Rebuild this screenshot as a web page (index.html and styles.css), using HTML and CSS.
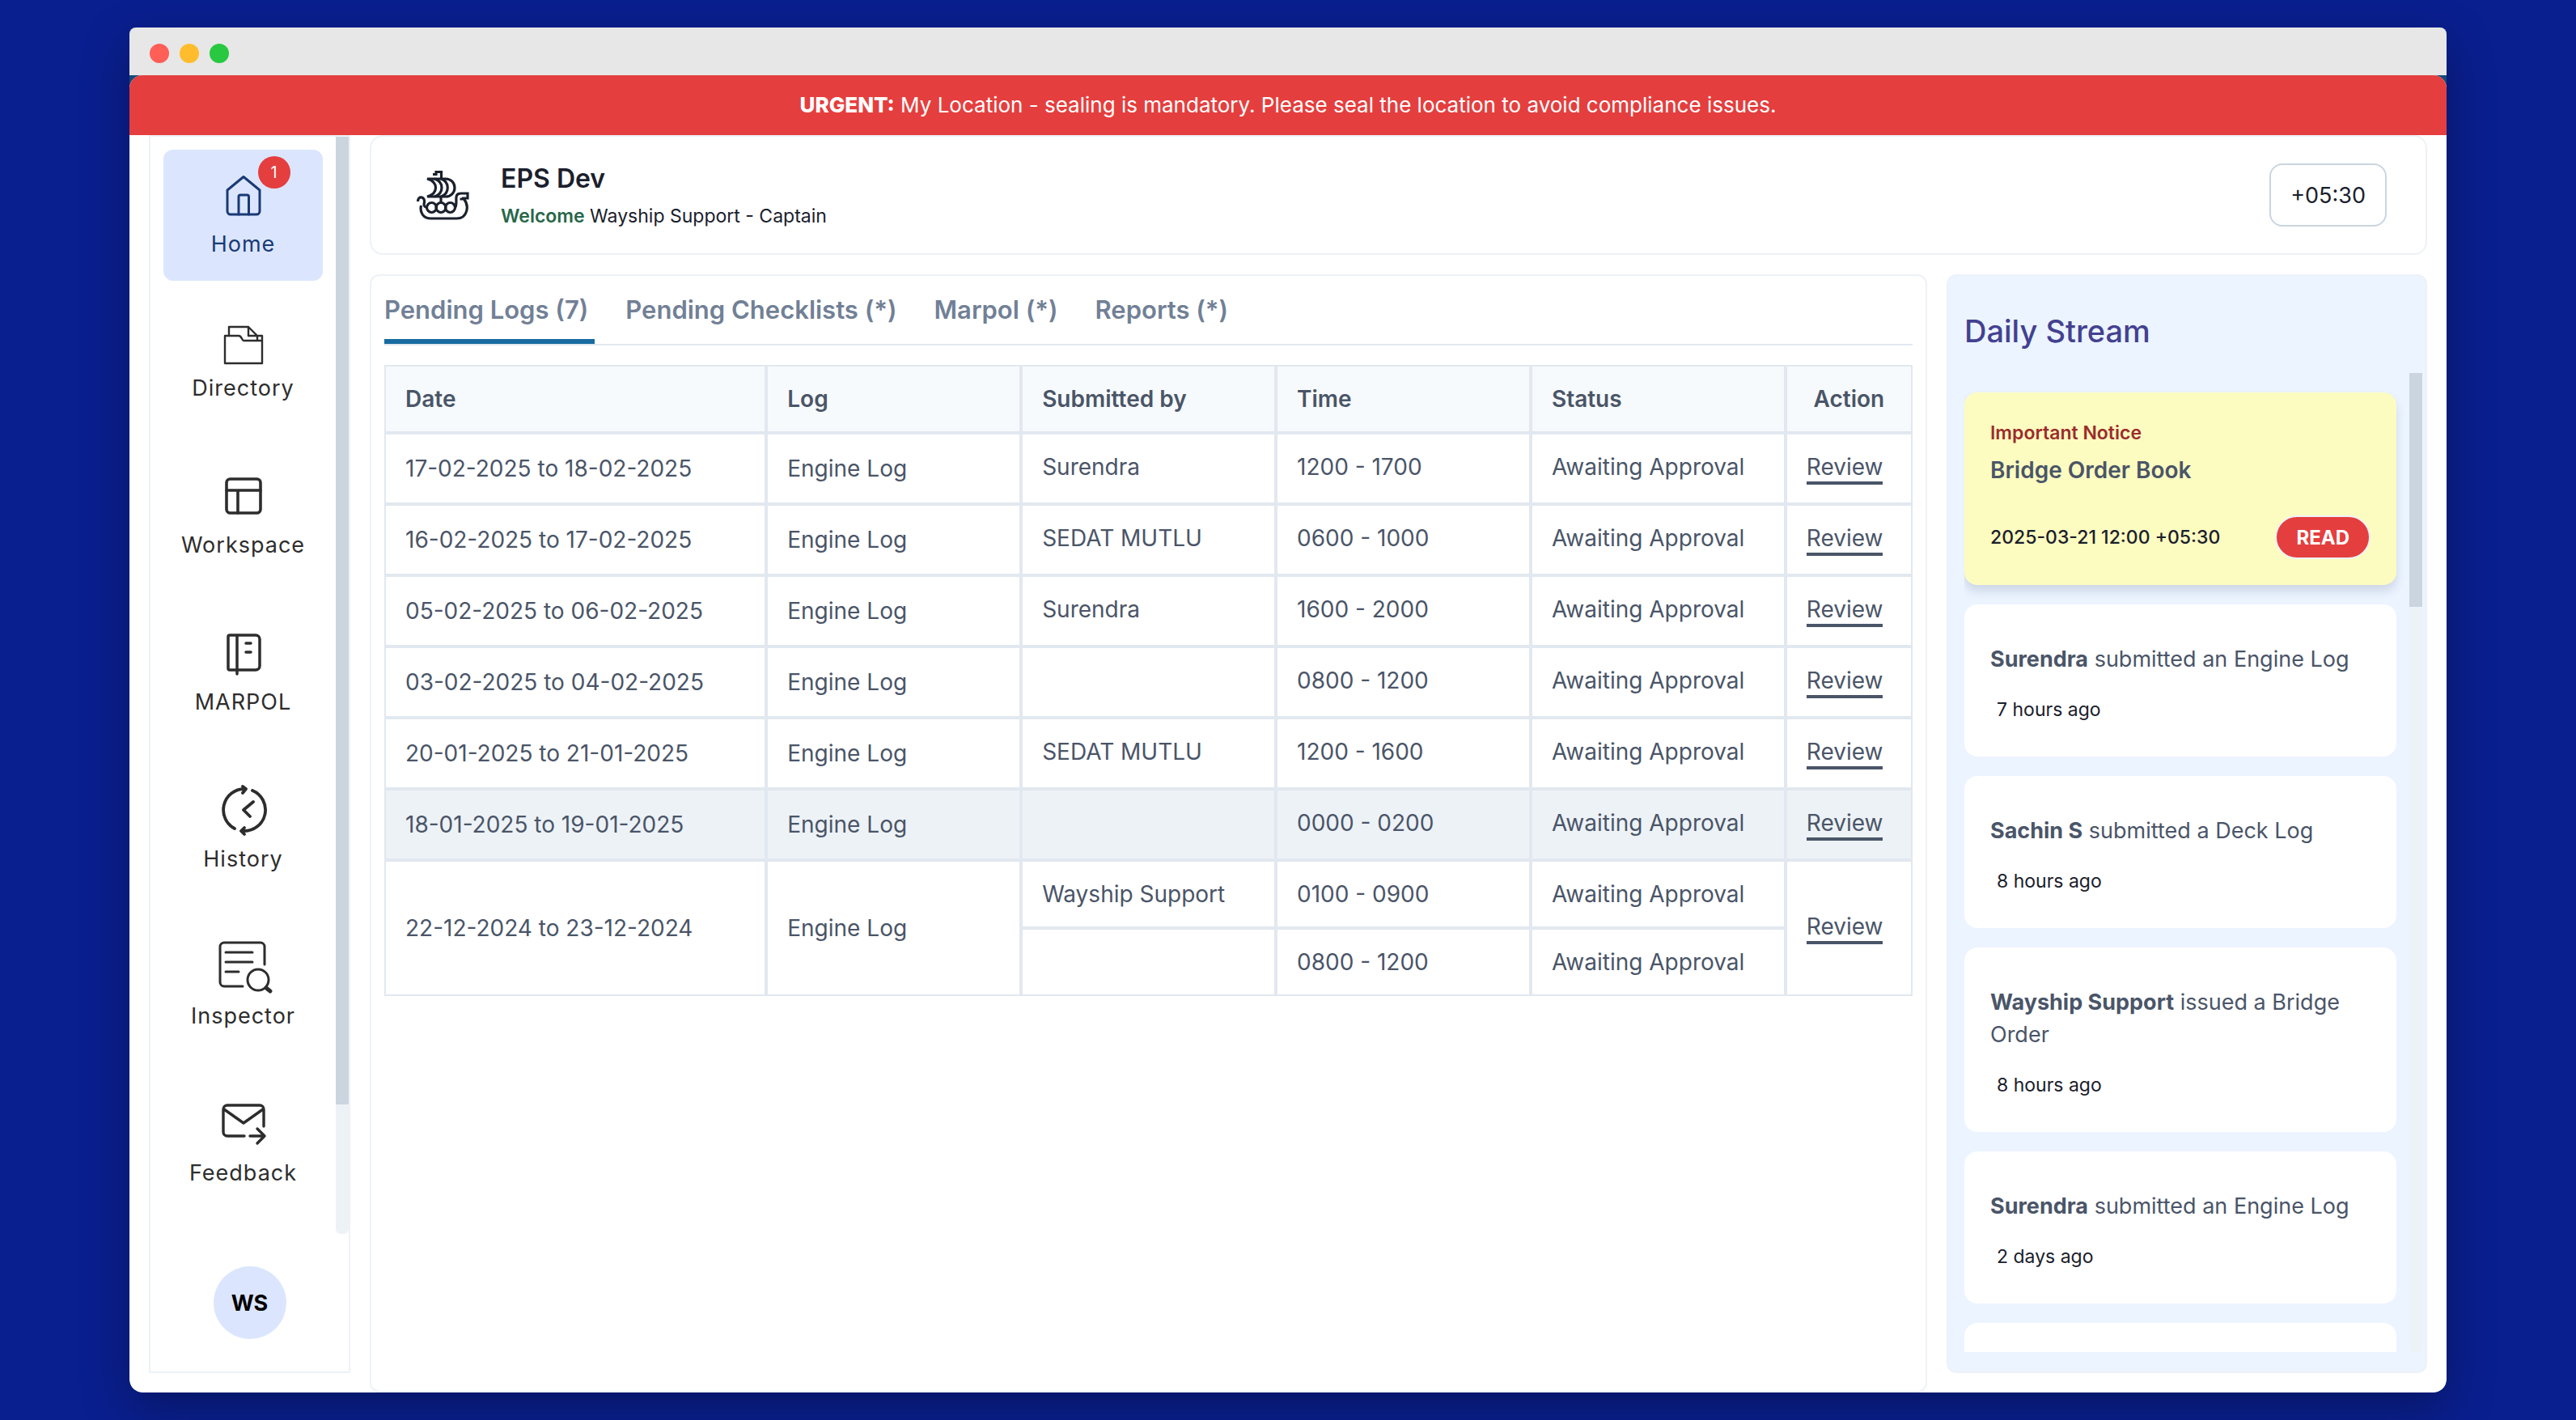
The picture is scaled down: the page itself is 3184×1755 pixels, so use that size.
FILE: index.html
```html
<!DOCTYPE html>
<html lang="en">
<head>
    <meta charset="UTF-8">
    <meta name="viewport" content="width=device-width, initial-scale=1.0">
    <title>EPS Dev</title>
    <link rel="stylesheet" href="styles.css">
</head>
<body>
    <div class="window">
        <!-- Title bar -->
        <div class="titlebar">
            <span class="light light-close"></span>
            <span class="light light-min"></span>
            <span class="light light-max"></span>
        </div>

        <div class="app">
            <div class="alert" role="alert"><strong>URGENT:</strong> My Location - sealing is mandatory. Please seal the location to avoid compliance issues.</div>

            <div class="layout">
                <!-- Sidebar -->
                <aside class="sidebar">
                    <div class="nav-scroll">
                        <nav class="nav">
                            <a class="nav-item active" href="#">
                                <span class="nav-icon">
                                    <svg width="64" height="64" viewBox="0 0 64 64" stroke-width="3">
                                        <path d="M12 26 32 9.500 52 26V52a4 4 0 0 1-4 4H16a4 4 0 0 1-4-4z"/>
                                        <path d="M26 56V34a2 2 0 0 1 2-2h8.500a2 2 0 0 1 2 2V56"/>
                                    </svg>
                                    <span class="badge">1</span>
                                </span>
                                <span class="nav-label">Home</span>
                            </a>
                            <a class="nav-item" href="#">
                                <svg width="48" height="48" viewBox="0 0 48 48" stroke-width="2.400">
                                    <path d="M1 12h17c4 0 4 6 6 6h23v28H1zM6 12V1h24l11 11h6v6M30 1v11h11v6"/>
                                </svg>
                                <span class="nav-label">Directory</span>
                            </a>
                            <a class="nav-item" href="#">
                                <svg width="64" height="64" viewBox="0 0 64 64" stroke-width="3.600">
                                    <rect x="11" y="11" width="42" height="42" rx="4.500"/>
                                    <path d="M11 25h42M25 25v28"/>
                                </svg>
                                <span class="nav-label">Workspace</span>
                            </a>
                            <a class="nav-item" href="#">
                                <svg width="64" height="64" viewBox="0 0 64 64" stroke-width="3.500">
                                    <path d="M15 10h32a5 5 0 0 1 5 5v33a5 5 0 0 1-5 5H15a2 2 0 0 1-2-2V12a2 2 0 0 1 2-2zM24 10v48M35 20h6M35 31h6"/>
                                </svg>
                                <span class="nav-label">MARPOL</span>
                            </a>
                            <a class="nav-item" href="#">
                                <svg width="64" height="64" viewBox="0 0 64 64" stroke-width="3.800">
                                    <path d="M21 55A26 26 0 0 1 33 6M31 3l4 3-4 5M43 8a26 26 0 0 1-11 50M33 54l-4 4 4 4M44 22 32 32l8 8"/>
                                </svg>
                                <span class="nav-label">History</span>
                            </a>
                            <a class="nav-item" href="#">
                                <svg width="64" height="64" viewBox="0 0 64 64" stroke-width="3">
                                    <path d="M31 56H8a5 5 0 0 1-5-5V7a5 5 0 0 1 5-5h45a5 5 0 0 1 5 5v22M10 14h33M10 26h33M10 38h16"/>
                                    <circle cx="50" cy="48" r="13"/>
                                    <path d="m60 58 5 4" stroke-width="5"/>
                                </svg>
                                <span class="nav-label">Inspector</span>
                            </a>
                            <a class="nav-item" href="#">
                                <svg width="64" height="64" viewBox="0 0 64 64" stroke-width="3.400">
                                    <path d="M33 47H12a5 5 0 0 1-5-5V14a5 5 0 0 1 5-5h40a5 5 0 0 1 5 5v21M8 14l24 17 24-17M40 47h17M49 38l9 9-9 9"/>
                                </svg>
                                <span class="nav-label">Feedback</span>
                            </a>
                        </nav>
                        <div class="track"><div class="thumb" style="height: 88.2%"></div></div>
                    </div>
                    <button class="avatar" type="button">WS</button>
                </aside>

                <main class="content">
                    <!-- Vessel header -->
                    <header class="vessel">
                        <svg class="ship" width="64" height="64" viewBox="0 0 64 60" stroke-width="3.200">
                            <path d="M20 4.500h4V1.500h6.500V9M30 32v7"/>
                            <path d="M13 10h23a11 11 0 0 1 0 22H13c14-4 14-18 0-22z"/>
                            <path d="M22 10c12 4 12 18 0 22M30 10c11 4 11 18 0 22"/>
                            <circle cx="18.500" cy="45.500" r="6"/>
                            <circle cx="30" cy="45.500" r="6"/>
                            <circle cx="41.500" cy="45.500" r="6"/>
                            <path d="M1.500 38c0-8 9-6 8 1-1 4 0 6 3 6M5.500 43c-2 9 3 16 12 16h32c13 0 16-15 9-24h-5M48 45c3-8-3-17 7-17h8v6h-7"/>
                        </svg>
                        <div class="vessel-info">
                            <h1>EPS Dev</h1>
                            <p><b>Welcome</b> Wayship Support - Captain</p>
                        </div>
                        <button class="timezone" type="button">+05:30</button>
                    </header>

                    <div class="columns">
                        <section class="panel">
                            <div class="tabs" role="tablist">
                                <button class="tab selected" role="tab" aria-selected="true">Pending Logs (7)</button>
                                <button class="tab" role="tab">Pending Checklists (*)</button>
                                <button class="tab" role="tab">Marpol (*)</button>
                                <button class="tab" role="tab">Reports (*)</button>
                            </div>

                            <table class="logs">
                                <colgroup>
                                    <col class="col-date">
                                    <col class="col-mid">
                                    <col class="col-mid">
                                    <col class="col-mid">
                                    <col class="col-mid">
                                    <col>
                                </colgroup>
                                <thead>
                                    <tr>
                                        <th>Date</th>
                                        <th>Log</th>
                                        <th>Submitted by</th>
                                        <th>Time</th>
                                        <th>Status</th>
                                        <th class="action">Action</th>
                                    </tr>
                                </thead>
                                <tbody>
                                    <tr>
                                        <td class="mid">17-02-2025 to 18-02-2025</td>
                                        <td class="mid">Engine Log</td>
                                        <td>Surendra</td>
                                        <td>1200 - 1700</td>
                                        <td>Awaiting Approval</td>
                                        <td class="mid"><a href="#">Review</a></td>
                                    </tr>
                                    <tr>
                                        <td class="mid">16-02-2025 to 17-02-2025</td>
                                        <td class="mid">Engine Log</td>
                                        <td>SEDAT MUTLU</td>
                                        <td>0600 - 1000</td>
                                        <td>Awaiting Approval</td>
                                        <td class="mid"><a href="#">Review</a></td>
                                    </tr>
                                    <tr>
                                        <td class="mid">05-02-2025 to 06-02-2025</td>
                                        <td class="mid">Engine Log</td>
                                        <td>Surendra</td>
                                        <td>1600 - 2000</td>
                                        <td>Awaiting Approval</td>
                                        <td class="mid"><a href="#">Review</a></td>
                                    </tr>
                                    <tr>
                                        <td class="mid">03-02-2025 to 04-02-2025</td>
                                        <td class="mid">Engine Log</td>
                                        <td></td>
                                        <td>0800 - 1200</td>
                                        <td>Awaiting Approval</td>
                                        <td class="mid"><a href="#">Review</a></td>
                                    </tr>
                                    <tr>
                                        <td class="mid">20-01-2025 to 21-01-2025</td>
                                        <td class="mid">Engine Log</td>
                                        <td>SEDAT MUTLU</td>
                                        <td>1200 - 1600</td>
                                        <td>Awaiting Approval</td>
                                        <td class="mid"><a href="#">Review</a></td>
                                    </tr>
                                    <tr class="hovered">
                                        <td class="mid">18-01-2025 to 19-01-2025</td>
                                        <td class="mid">Engine Log</td>
                                        <td></td>
                                        <td>0000 - 0200</td>
                                        <td>Awaiting Approval</td>
                                        <td class="mid"><a href="#">Review</a></td>
                                    </tr>
                                    <tr>
                                        <td class="mid" rowspan="2">22-12-2024 to 23-12-2024</td>
                                        <td class="mid" rowspan="2">Engine Log</td>
                                        <td>Wayship Support</td>
                                        <td>0100 - 0900</td>
                                        <td>Awaiting Approval</td>
                                        <td class="mid" rowspan="2"><a href="#">Review</a></td>
                                    </tr>
                                    <tr>
                                        <td></td>
                                        <td>0800 - 1200</td>
                                        <td>Awaiting Approval</td>
                                    </tr>
                                </tbody>
                            </table>
                        </section>

                        <!-- Daily stream -->
                        <section class="stream">
                            <h2>Daily Stream</h2>
                            <div class="stream-scroll">
                                <div class="cards">
                                    <article class="card notice">
                                        <p class="notice-label">Important Notice</p>
                                        <p class="notice-title">Bridge Order Book</p>
                                        <div class="notice-row">
                                            <time>2025-03-21 12:00 +05:30</time>
                                            <button class="read" type="button">READ</button>
                                        </div>
                                    </article>
                                    <article class="card">
                                        <p><b>Surendra</b> submitted an Engine Log</p>
                                        <time>7 hours ago</time>
                                    </article>
                                    <article class="card">
                                        <p><b>Sachin S</b> submitted a Deck Log</p>
                                        <time>8 hours ago</time>
                                    </article>
                                    <article class="card">
                                        <p><b>Wayship Support</b> issued a Bridge Order</p>
                                        <time>8 hours ago</time>
                                    </article>
                                    <article class="card">
                                        <p><b>Surendra</b> submitted an Engine Log</p>
                                        <time>2 days ago</time>
                                    </article>
                                    <article class="card card-next"></article>
                                </div>
                                <div class="track"><div class="thumb" style="height: 23.9%"></div></div>
                            </div>
                        </section>
                    </div>
                </main>
            </div>
        </div>
    </div>
</body>
</html>
```
FILE: styles.css
```css
* {
    box-sizing: border-box;
}

body {
    margin: 0;
    height: 100vh;
    padding: 34px 160px;
    overflow: hidden;
    background-color: #0a1f8f;
    color: #1a202c;
    font-family: Inter, "Liberation Sans", sans-serif;
    font-size: 28px;
    line-height: 40px;
}

h1, h2, p {
    margin: 0;
}

button {
    font-family: inherit;
    color: inherit;
    cursor: pointer;
}

svg {
    fill: none;
    stroke: currentColor;
    stroke-linecap: round;
    stroke-linejoin: round;
    overflow: visible;
}

/* Browser window */
.window {
    display: flex;
    flex-direction: column;
    height: 100%;
    border-radius: 8px 8px 16px 16px;
    background-color: #154a7c;
    box-shadow: 0 20px 60px rgba(0, 0, 0, 0.3);
    overflow: hidden;
}

.titlebar {
    display: flex;
    align-items: center;
    gap: 13px;
    height: 59px;
    padding: 4px 25px 0;
    background-color: #e7e7e7;
    flex-shrink: 0;
}

.light {
    width: 24px;
    height: 24px;
    border-radius: 50%;
}

.light-close { background-color: #ff5f57; }
.light-min { background-color: #ffbd2e; }
.light-max { background-color: #28c840; }

.app {
    display: flex;
    flex-direction: column;
    flex: 1;
    min-height: 0;
    border-radius: 16px;
    background-color: #fff;
    overflow: hidden;
}

.alert {
    padding: 17px 32px;
    background-color: #e53e3e;
    color: #fff;
    font-size: 26px;
    text-align: center;
    flex-shrink: 0;
}

.alert strong {
    font-weight: 800;
}

.layout {
    display: flex;
    flex: 1;
    gap: 24px;
    min-height: 0;
    padding: 0 24px;
}

/* Drawn scrollbars */
.track {
    width: 16px;
    background-color: #edf2f7;
    border-radius: 0 0 6px 6px;
    flex-shrink: 0;
}

.thumb {
    background-color: #cbd5e0;
}

/* Sidebar */
.sidebar {
    display: flex;
    flex-direction: column;
    align-items: center;
    width: 249px;
    margin-bottom: 24px;
    border: 2px solid #edf2f7;
    flex-shrink: 0;
}

.nav-scroll {
    display: flex;
    flex: 1;
    width: 100%;
    min-height: 0;
    overflow: hidden;
}

.nav {
    display: flex;
    flex: 1;
    flex-direction: column;
    gap: 32px;
    padding: 16px;
}

.nav-item {
    display: flex;
    flex-direction: column;
    align-items: center;
    gap: 8px;
    padding: 24px 0;
    border-radius: 12px;
    color: #2d2d2d;
    text-decoration: none;
    flex-shrink: 0;
}

.nav-item.active {
    background-color: #dbe6fe;
    color: #1a3a75;
}

.nav-icon {
    position: relative;
    height: 64px;
}

.nav-label {
    font-size: 27px;
    line-height: 42px;
    letter-spacing: 1px;
}

.badge {
    position: absolute;
    top: -16px;
    right: -26px;
    width: 40px;
    height: 40px;
    border-radius: 50%;
    background-color: #e53e3e;
    color: #fff;
    font-size: 20px;
    line-height: 40px;
    text-align: center;
}

.avatar {
    width: 90px;
    height: 90px;
    margin: 40px 0;
    padding: 0;
    border: none;
    border-radius: 50%;
    background-color: #dbe6fe;
    color: #000;
    font-size: 27px;
    font-weight: 700;
    flex-shrink: 0;
}

/* Main content */
.content {
    display: flex;
    flex: 1;
    flex-direction: column;
    gap: 24px;
    min-width: 0;
}

.vessel {
    display: flex;
    align-items: center;
    gap: 40px;
    height: 148px;
    padding: 0 48px 0 56px;
    border: 2px solid #edf2f7;
    border-radius: 16px;
    flex-shrink: 0;
}

.ship {
    stroke-linecap: butt;
    stroke-linejoin: miter;
}

.vessel-info {
    flex: 1;
    padding-top: 4px;
}

.vessel h1 {
    font-size: 32px;
    font-weight: 600;
    line-height: 48px;
}

.vessel p {
    font-size: 23px;
    line-height: 44px;
}

.vessel b {
    color: #276749;
    font-weight: 600;
}

.timezone {
    height: 78px;
    padding: 0 24px;
    border: 2px solid #cbd5e0;
    border-radius: 16px;
    background-color: #fff;
    font-size: 27px;
}

.columns {
    display: flex;
    flex: 1;
    gap: 24px;
    min-height: 0;
}

.panel {
    flex: 1;
    padding: 16px;
    border: 2px solid #edf2f7;
    border-radius: 12px;
    min-width: 0;
}

.tabs {
    display: flex;
    gap: 38px;
    margin-bottom: 24px;
    border-bottom: 2px solid #e2e8f0;
}

.tab {
    height: 68px;
    padding: 0 8px 12px 0;
    border: none;
    border-bottom: 6px solid transparent;
    background: none;
    color: #718096;
    font-size: 31px;
    font-weight: 600;
}

.tab.selected {
    border-bottom-color: #176ba0;
}

/* Logs table */
.logs {
    width: 100%;
    table-layout: fixed;
    border-collapse: separate;
    border-spacing: 0;
    color: #4a5568;
}

.col-date { width: 25%; }
.col-mid { width: 16.67%; }

.logs th,
.logs td {
    padding: 20px 24px;
    border: 2px solid #e2e8f0;
    text-align: left;
    vertical-align: top;
    white-space: nowrap;
}

.logs th {
    background-color: #f7fafc;
    font-weight: 600;
}

.logs .action {
    text-align: center;
}

.logs .mid {
    vertical-align: middle;
}

.logs a {
    display: block;
    width: fit-content;
    border-bottom: 4px solid #4a5568;
    color: inherit;
    line-height: 36px;
    margin: 2px 0;
    text-decoration: none;
}

.hovered {
    background-color: #edf2f7;
}

/* Daily stream */
.stream {
    display: flex;
    flex-direction: column;
    width: 594px;
    margin-bottom: 24px;
    padding: 0 4px 24px 20px;
    border: 2px solid #edf2f7;
    border-radius: 12px;
    background-color: #ebf4ff;
    flex-shrink: 0;
}

.stream h2 {
    padding: 44px 0 28px;
    color: #434190;
    font-size: 38px;
    font-weight: 500;
    line-height: 48px;
}

.stream-scroll {
    display: flex;
    flex: 1;
    gap: 16px;
    min-height: 0;
    overflow: hidden;
}

.cards {
    display: flex;
    flex: 1;
    flex-direction: column;
    gap: 24px;
    padding-top: 24px;
}

.card {
    padding: 48px 32px 40px;
    border-radius: 16px;
    background-color: #fff;
    color: #4a5568;
    font-size: 27px;
    flex-shrink: 0;
}

.card b {
    font-weight: 700;
}

.card time {
    display: block;
    margin-top: 24px;
    padding-left: 8px;
    color: #1a202c;
    font-size: 23px;
    line-height: 36px;
}

.card-next {
    height: 188px;
}

.notice {
    padding: 32px;
    background-color: #fdfcc0;
    box-shadow: 0 8px 12px rgba(45, 55, 90, 0.15);
}

.notice-label {
    color: #9b2c2c;
    font-size: 23px;
    font-weight: 600;
    line-height: 36px;
}

.notice-title {
    margin: 8px 0 36px;
    font-size: 28px;
    font-weight: 600;
}

.notice-row {
    display: flex;
    align-items: center;
    justify-content: space-between;
}

.notice-row time {
    margin: 0;
    padding: 0;
    font-weight: 500;
}

.read {
    height: 54px;
    padding: 0 24px;
    border: 2px solid #edf2f7;
    border-radius: 27px;
    background-color: #e53e3e;
    color: #fff;
    font-size: 24px;
    font-weight: 700;
}
```
